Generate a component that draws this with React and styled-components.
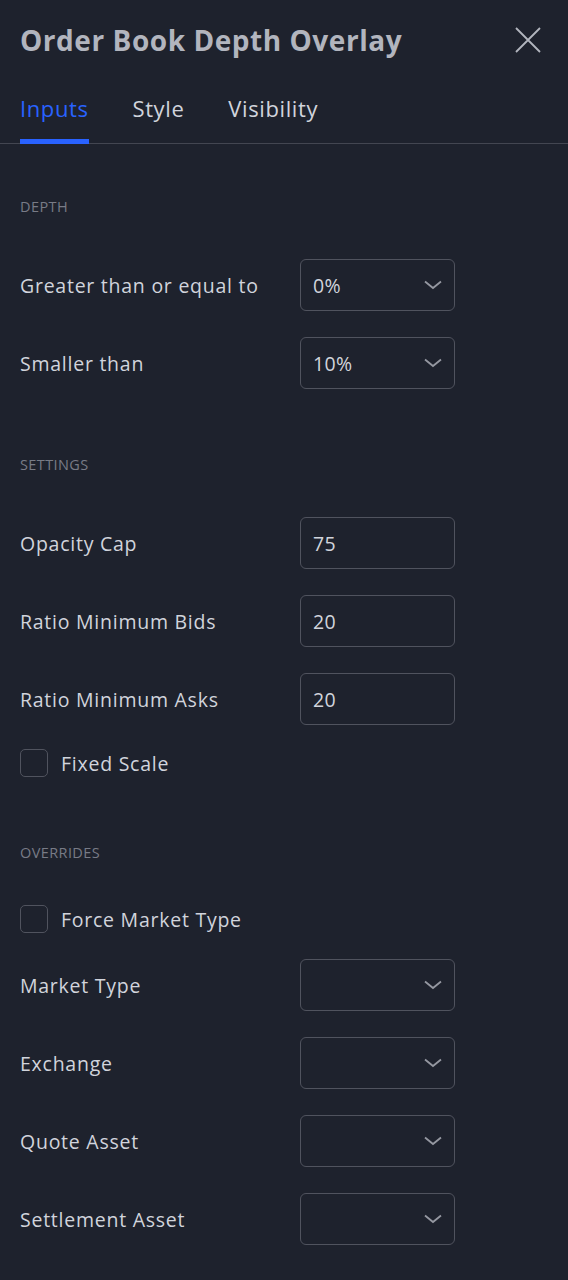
import React from "react";
import styled, { createGlobalStyle } from "styled-components";

const GlobalStyle = createGlobalStyle`
  html, body {
    margin: 0;
    padding: 0;
    background: #1e222d;
  }
  body {
    font-family: "Open Sans", "Noto Sans", sans-serif;
  }
`;

const Panel = styled.div`
  width: 568px;
  min-height: 1280px;
  background: #1e222d;
  color: #d1d4dc;
  box-sizing: border-box;
`;

const Header = styled.div`
  height: 80px;
  display: flex;
  align-items: center;
  justify-content: space-between;
  padding: 0 26px 0 20px;
`;

const Title = styled.h1`
  margin: 0;
  font-size: 28px;
  font-weight: 700;
  color: #b2b5be;
  letter-spacing: 0.55px;
`;

const CloseButton = styled.button`
  background: none;
  border: 0;
  padding: 0;
  width: 28px;
  height: 28px;
  display: flex;
  align-items: center;
  justify-content: center;
  color: #b2b5be;
  cursor: pointer;
`;

const TabBar = styled.div`
  display: flex;
  gap: 44px;
  padding: 0 20px;
  height: 63px;
  border-bottom: 1px solid #434651;
`;

const Tab = styled.div`
  position: relative;
  padding-top: 15px;
  font-size: 22px;
  line-height: 26px;
  letter-spacing: 0.6px;
  color: ${(p) => (p.active ? "#2962ff" : "#d1d4dc")};

  &::after {
    content: "";
    display: ${(p) => (p.active ? "block" : "none")};
    position: absolute;
    left: 0;
    right: 0;
    bottom: -1px;
    height: 5px;
    background: #2962ff;
  }
`;

const Body = styled.div`
  display: flex;
  flex-direction: column;
  gap: 66px;
  padding: 53px 20px 40px;
`;

const Section = styled.div`
  display: flex;
  flex-direction: column;
  gap: 26px;
`;

const SectionTitle = styled.div`
  font-size: 14.5px;
  line-height: 20px;
  letter-spacing: 0.4px;
  color: #787b86;
  text-transform: uppercase;
  margin-bottom: 16px;
`;

const Row = styled.div`
  display: grid;
  grid-template-columns: 280px 155px;
  align-items: center;
  height: 52px;
`;

const Label = styled.div`
  font-size: 19.5px;
  letter-spacing: 0.75px;
  color: #d1d4dc;
`;

const Field = styled.div`
  box-sizing: border-box;
  height: 52px;
  border: 1px solid #50535e;
  border-radius: 6px;
  display: flex;
  align-items: center;
  justify-content: space-between;
  padding: 0 12px 0 12px;
  font-size: 19.5px;
  letter-spacing: 0.3px;
  color: #d1d4dc;
`;

const Chevron = styled.svg`
  color: #9598a1;
  flex-shrink: 0;
`;

const CheckRow = styled.label`
  display: flex;
  align-items: center;
  gap: 13px;
  height: 28px;
  margin-top: ${(p) => p.offset || 0}px;
`;

const Box = styled.span`
  box-sizing: border-box;
  width: 28px;
  height: 28px;
  border: 1px solid #50535e;
  border-radius: 5px;
`;

const CloseIcon = () => (
  <svg width="26" height="26" viewBox="0 0 26 26" fill="none">
    <path d="M1 1L25 25M25 1L1 25" stroke="currentColor" strokeWidth="1.8" />
  </svg>
);

const Select = ({ value }) => (
  <Field>
    <span>{value}</span>
    <Chevron width="18" height="10" viewBox="0 0 18 10" fill="none">
      <path d="M1 1.5L9 8L17 1.5" stroke="currentColor" strokeWidth="1.8" />
    </Chevron>
  </Field>
);

const Checkbox = ({ label, offset }) => (
  <CheckRow offset={offset}>
    <Box />
    <Label>{label}</Label>
  </CheckRow>
);

const depthRows = [
  { label: "Greater than or equal to", value: "0%" },
  { label: "Smaller than", value: "10%" },
];

const settingRows = [
  { label: "Opacity Cap", value: "75" },
  { label: "Ratio Minimum Bids", value: "20" },
  { label: "Ratio Minimum Asks", value: "20" },
];

const overrideRows = ["Market Type", "Exchange", "Quote Asset", "Settlement Asset"];

export default function App() {
  return (
    <Panel>
      <GlobalStyle />
      <Header>
        <Title>Order Book Depth Overlay</Title>
        <CloseButton>
          <CloseIcon />
        </CloseButton>
      </Header>
      <TabBar>
        <Tab active>Inputs</Tab>
        <Tab>Style</Tab>
        <Tab>Visibility</Tab>
      </TabBar>
      <Body>
        <Section>
          <SectionTitle>Depth</SectionTitle>
          {depthRows.map((r) => (
            <Row key={r.label}>
              <Label>{r.label}</Label>
              <Select value={r.value} />
            </Row>
          ))}
        </Section>
        <Section>
          <SectionTitle>Settings</SectionTitle>
          {settingRows.map((r) => (
            <Row key={r.label}>
              <Label>{r.label}</Label>
              <Field>{r.value}</Field>
            </Row>
          ))}
          <Checkbox label="Fixed Scale" offset={-2} />
        </Section>
        <Section>
          <SectionTitle>Overrides</SectionTitle>
          <Checkbox label="Force Market Type" />
          {overrideRows.map((name) => (
            <Row key={name}>
              <Label>{name}</Label>
              <Select value="" />
            </Row>
          ))}
        </Section>
      </Body>
    </Panel>
  );
}
